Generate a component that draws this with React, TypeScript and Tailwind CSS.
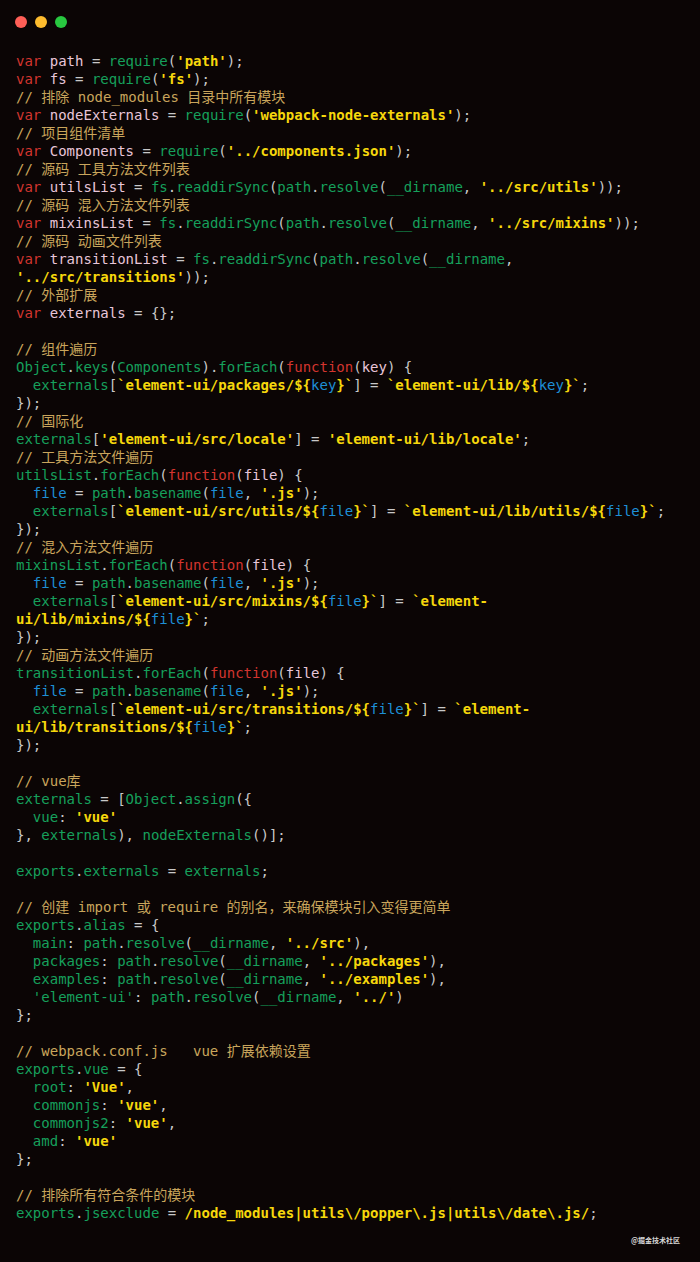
type Tok = [string, string]

const k = 'text-[#d3352f]'
const v = 'text-[#e8c6d9]'
const o = 'text-[#c9c9c9]'
const f = 'text-[#16a05c]'
const s = 'text-[#f6d70c] font-bold'
const c = 'text-[#c9a55c]'
const b = 'text-[#1e8fd6]'

const lines: Tok[][] = [
  [['var', k], [' ', o], ['path', v], [' = ', o], ['require', f], ['(', o], ["'path'", s], [');', o]],
  [['var', k], [' ', o], ['fs', v], [' = ', o], ['require', f], ['(', o], ["'fs'", s], [');', o]],
  [['// 排除 node_modules 目录中所有模块', c]],
  [['var', k], [' ', o], ['nodeExternals', v], [' = ', o], ['require', f], ['(', o], ["'webpack-node-externals'", s], [');', o]],
  [['// 项目组件清单', c]],
  [['var', k], [' ', o], ['Components', v], [' = ', o], ['require', f], ['(', o], ["'../components.json'", s], [');', o]],
  [['// 源码 工具方法文件列表', c]],
  [['var', k], [' ', o], ['utilsList', v], [' = ', o], ['fs', f], ['.', o], ['readdirSync', f], ['(', o], ['path', f], ['.', o], ['resolve', f], ['(', o], ['__dirname', f], [', ', o], ["'../src/utils'", s], ['));', o]],
  [['// 源码 混入方法文件列表', c]],
  [['var', k], [' ', o], ['mixinsList', v], [' = ', o], ['fs', f], ['.', o], ['readdirSync', f], ['(', o], ['path', f], ['.', o], ['resolve', f], ['(', o], ['__dirname', f], [', ', o], ["'../src/mixins'", s], ['));', o]],
  [['// 源码 动画文件列表', c]],
  [['var', k], [' ', o], ['transitionList', v], [' = ', o], ['fs', f], ['.', o], ['readdirSync', f], ['(', o], ['path', f], ['.', o], ['resolve', f], ['(', o], ['__dirname', f], [',', o]],
  [["'../src/transitions'", s], ['));', o]],
  [['// 外部扩展', c]],
  [['var', k], [' ', o], ['externals', v], [' = {};', o]],
  [],
  [['// 组件遍历', c]],
  [['Object', f], ['.', o], ['keys', f], ['(', o], ['Components', f], [').', o], ['forEach', f], ['(', o], ['function', k], ['(', o], ['key', v], [') {', o]],
  [['  ', o], ['externals', f], ['[', o], ['`element-ui/packages/${', s], ['key', b], ['}`', s], ['] = ', o], ['`element-ui/lib/${', s], ['key', b], ['}`', s], [';', o]],
  [['});', o]],
  [['// 国际化', c]],
  [['externals', f], ['[', o], ["'element-ui/src/locale'", s], ['] = ', o], ["'element-ui/lib/locale'", s], [';', o]],
  [['// 工具方法文件遍历', c]],
  [['utilsList', f], ['.', o], ['forEach', f], ['(', o], ['function', k], ['(', o], ['file', v], [') {', o]],
  [['  ', o], ['file', b], [' = ', o], ['path', f], ['.', o], ['basename', f], ['(', o], ['file', b], [', ', o], ["'.js'", s], [');', o]],
  [['  ', o], ['externals', f], ['[', o], ['`element-ui/src/utils/${', s], ['file', b], ['}`', s], ['] = ', o], ['`element-ui/lib/utils/${', s], ['file', b], ['}`', s], [';', o]],
  [['});', o]],
  [['// 混入方法文件遍历', c]],
  [['mixinsList', f], ['.', o], ['forEach', f], ['(', o], ['function', k], ['(', o], ['file', v], [') {', o]],
  [['  ', o], ['file', b], [' = ', o], ['path', f], ['.', o], ['basename', f], ['(', o], ['file', b], [', ', o], ["'.js'", s], [');', o]],
  [['  ', o], ['externals', f], ['[', o], ['`element-ui/src/mixins/${', s], ['file', b], ['}`', s], ['] = ', o], ['`element-', s]],
  [['ui/lib/mixins/${', s], ['file', b], ['}`', s], [';', o]],
  [['});', o]],
  [['// 动画方法文件遍历', c]],
  [['transitionList', f], ['.', o], ['forEach', f], ['(', o], ['function', k], ['(', o], ['file', v], [') {', o]],
  [['  ', o], ['file', b], [' = ', o], ['path', f], ['.', o], ['basename', f], ['(', o], ['file', b], [', ', o], ["'.js'", s], [');', o]],
  [['  ', o], ['externals', f], ['[', o], ['`element-ui/src/transitions/${', s], ['file', b], ['}`', s], ['] = ', o], ['`element-', s]],
  [['ui/lib/transitions/${', s], ['file', b], ['}`', s], [';', o]],
  [['});', o]],
  [],
  [['// vue库', c]],
  [['externals', f], [' = [', o], ['Object', f], ['.', o], ['assign', f], ['({', o]],
  [['  ', o], ['vue', f], [': ', o], ["'vue'", s]],
  [['}, ', o], ['externals', f], ['), ', o], ['nodeExternals', f], ['()];', o]],
  [],
  [['exports', f], ['.', o], ['externals', f], [' = ', o], ['externals', f], [';', o]],
  [],
  [['// 创建 import 或 require 的别名，来确保模块引入变得更简单', c]],
  [['exports', f], ['.', o], ['alias', f], [' = {', o]],
  [['  ', o], ['main', f], [': ', o], ['path', f], ['.', o], ['resolve', f], ['(', o], ['__dirname', f], [', ', o], ["'../src'", s], ['),', o]],
  [['  ', o], ['packages', f], [': ', o], ['path', f], ['.', o], ['resolve', f], ['(', o], ['__dirname', f], [', ', o], ["'../packages'", s], ['),', o]],
  [['  ', o], ['examples', f], [': ', o], ['path', f], ['.', o], ['resolve', f], ['(', o], ['__dirname', f], [', ', o], ["'../examples'", s], ['),', o]],
  [['  ', o], ["'element-ui'", f], [': ', o], ['path', f], ['.', o], ['resolve', f], ['(', o], ['__dirname', f], [', ', o], ["'../'", s], [')', o]],
  [['};', o]],
  [],
  [['// webpack.conf.js   vue 扩展依赖设置', c]],
  [['exports', f], ['.', o], ['vue', f], [' = {', o]],
  [['  ', o], ['root', f], [': ', o], ["'Vue'", s], [',', o]],
  [['  ', o], ['commonjs', f], [': ', o], ["'vue'", s], [',', o]],
  [['  ', o], ['commonjs2', f], [': ', o], ["'vue'", s], [',', o]],
  [['  ', o], ['amd', f], [': ', o], ["'vue'", s]],
  [['};', o]],
  [],
  [['// 排除所有符合条件的模块', c]],
  [['exports', f], ['.', o], ['jsexclude', f], [' = ', o], ['/node_modules|utils\\/popper\\.js|utils\\/date\\.js/', s], [';', o]],
]

const App = () => {
  return (
    <div className="w-[700px] min-h-[1262px] bg-[#0b0505] pt-4 pb-[17px]">
      <div className="flex gap-2 pl-[15px]">
        <span className="w-3 h-3 rounded-full bg-[#ff5f57]" />
        <span className="w-3 h-3 rounded-full bg-[#febc2e]" />
        <span className="w-3 h-3 rounded-full bg-[#28c840]" />
      </div>

      <div
        className="mt-6 pl-4 pr-[28px] text-[14px] leading-[18px]"
        style={{ fontFamily: '"DejaVu Sans Mono", "Noto Sans CJK SC", monospace' }}
      >
        {lines.map((line, i) => (
          <div key={i} className="whitespace-pre min-h-[18px]">
            {line.map(([text, cls], j) => (
              <span key={j} className={cls}>
                {text}
              </span>
            ))}
          </div>
        ))}
      </div>

      <div
        className="mt-[13px] pr-5 text-right text-[7px] leading-[10px] text-[#d8d8d8] font-bold"
        style={{ fontFamily: '"Noto Sans CJK SC", sans-serif' }}
      >
        @掘金技术社区
      </div>
    </div>
  )
}

export default App
